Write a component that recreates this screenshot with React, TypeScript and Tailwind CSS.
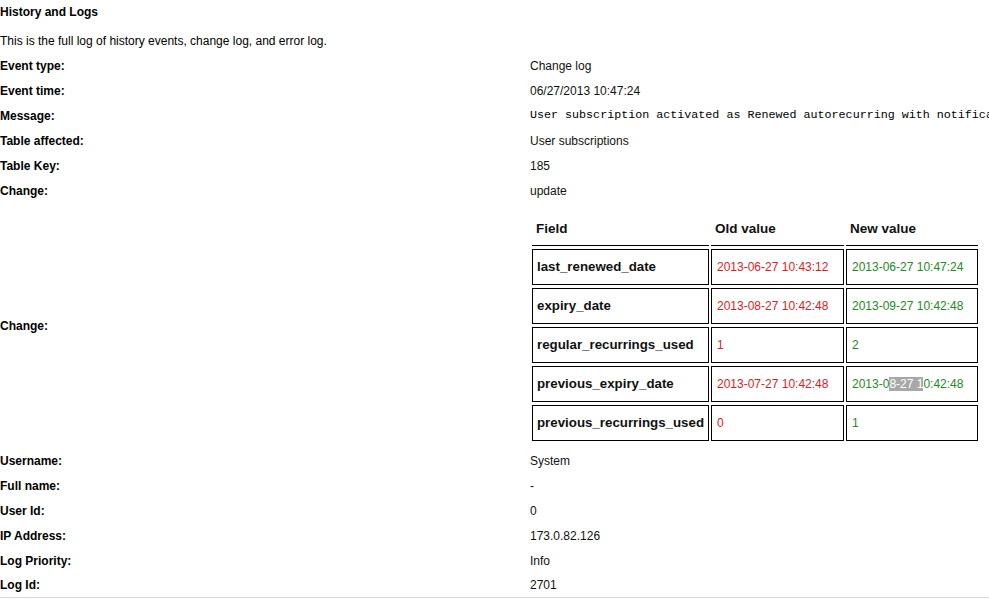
const topRows = [
  { label: 'Event type:', value: 'Change log' },
  { label: 'Event time:', value: '06/27/2013 10:47:24' },
  {
    label: 'Message:',
    value: 'User subscription activated as Renewed autorecurring with notifica',
    mono: true
  },
  { label: 'Table affected:', value: 'User subscriptions' },
  { label: 'Table Key:', value: '185' },
  { label: 'Change:', value: 'update' }
]

const bottomRows = [
  { label: 'Username:', value: 'System' },
  { label: 'Full name:', value: '-' },
  { label: 'User Id:', value: '0' },
  { label: 'IP Address:', value: '173.0.82.126' },
  { label: 'Log Priority:', value: 'Info' },
  { label: 'Log Id:', value: '2701' }
]

const changes = [
  { field: 'last_renewed_date', oldValue: '2013-06-27 10:43:12', newValue: '2013-06-27 10:47:24' },
  { field: 'expiry_date', oldValue: '2013-08-27 10:42:48', newValue: '2013-09-27 10:42:48' },
  { field: 'regular_recurrings_used', oldValue: '1', newValue: '2' },
  { field: 'previous_expiry_date', oldValue: '2013-07-27 10:42:48', newValue: 'selected' },
  { field: 'previous_recurrings_used', oldValue: '0', newValue: '1' }
]

type Row = { label: string; value: string; mono?: boolean }

function InfoRow({ row, last }: { row: Row; last?: boolean }) {
  return (
    <div className={`flex h-[25px] items-center ${last ? 'border-b border-[#d6d6d6]' : ''}`}>
      <div className="w-[530px] shrink-0 text-[12px] font-bold text-black">{row.label}</div>
      <div
        className={
          row.mono
            ? "whitespace-nowrap font-['Liberation_Mono','Courier_New',monospace] text-[11.7px] text-black"
            : 'whitespace-nowrap text-[12px] text-[#111]'
        }
      >
        {row.value}
      </div>
    </div>
  )
}

function ChangeTable() {
  return (
    <div className="ml-[2px] grid grid-cols-[177px_133px_132px] gap-x-[2px] gap-y-[3px]">
      <div className="flex h-[36px] items-center border-b border-black pl-[4px] pt-[3px] text-[13.5px] font-bold text-[#111]">Field</div>
      <div className="flex h-[36px] items-center border-b border-black pl-[4px] pt-[3px] text-[13.5px] font-bold text-[#111]">Old value</div>
      <div className="flex h-[36px] items-center border-b border-black pl-[4px] pt-[3px] text-[13.5px] font-bold text-[#111]">New value</div>
      {changes.map((c) => (
        <div key={c.field} className="contents">
          <div className="flex h-[36px] items-center border border-black pl-[4px] text-[13.3px] font-bold text-[#111]">
            {c.field}
          </div>
          <div className="flex h-[36px] items-center border border-black pl-[5px] text-[12px] text-[#dc1c24]">
            {c.oldValue}
          </div>
          <div className="flex h-[36px] items-center border border-black pl-[5px] text-[12px] text-[#238a23]">
            {c.newValue === 'selected' ? (
              <span className="whitespace-pre">
                2013-0<span className="bg-[#a8a8a8] text-white">8-27 1</span>0:42:48
              </span>
            ) : (
              c.newValue
            )}
          </div>
        </div>
      ))}
    </div>
  )
}

export default function App() {
  return (
    <main className="h-[600px] w-[989px] overflow-hidden bg-white font-['Liberation_Sans',Arial,sans-serif] text-black">
      <div className="h-[28px] pt-[5px] text-[12px] font-bold leading-[14px]">History and Logs</div>
      <div className="flex h-[25px] items-center text-[12px]">
        This is the full log of history events, change log, and error log.
      </div>
      {topRows.map((row) => (
        <InfoRow key={row.label} row={row} />
      ))}
      <div className="flex h-[245px] items-center">
        <div className="w-[530px] shrink-0 text-[12px] font-bold">Change:</div>
        <ChangeTable />
      </div>
      {bottomRows.map((row, i) => (
        <InfoRow key={row.label} row={row} last={i === bottomRows.length - 1} />
      ))}
    </main>
  )
}
